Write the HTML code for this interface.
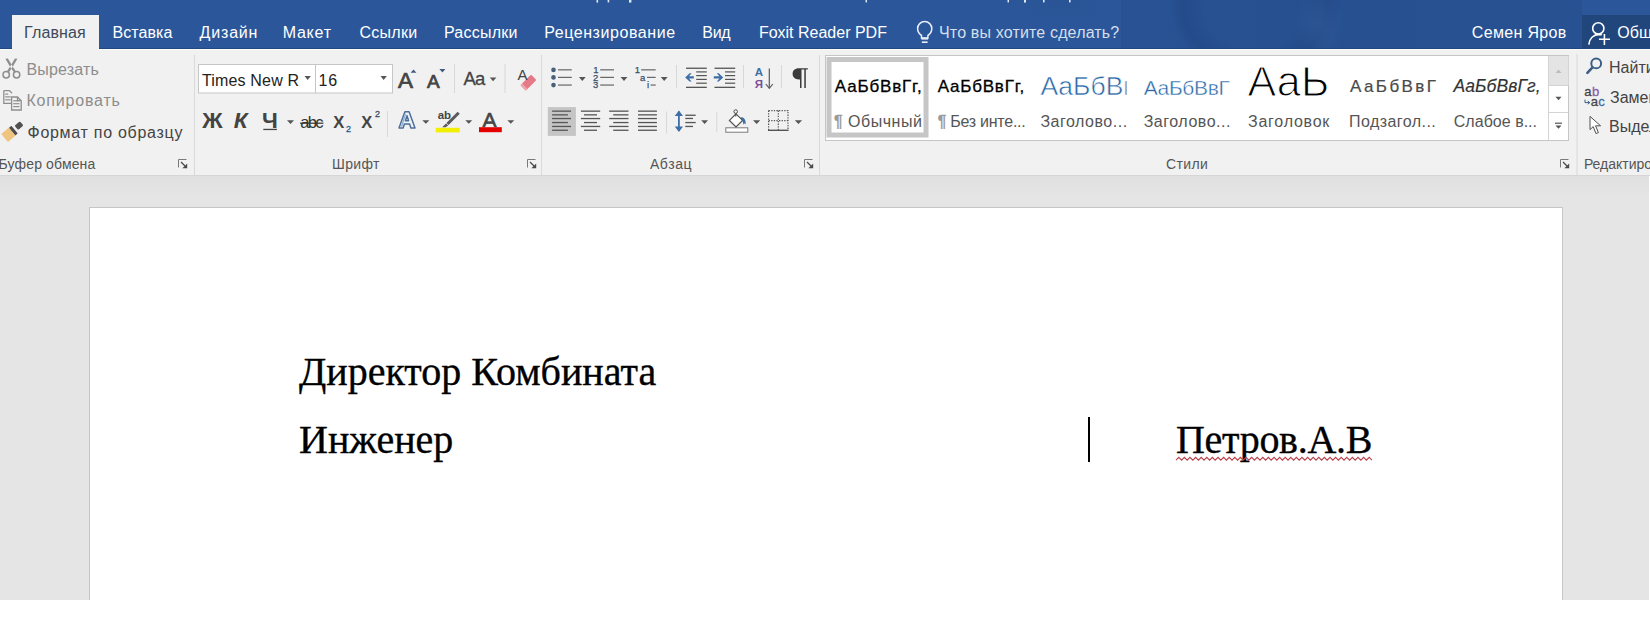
<!DOCTYPE html>
<html><head><meta charset="utf-8">
<style>
*{margin:0;padding:0;box-sizing:border-box}
html,body{width:1650px;height:639px;overflow:hidden;background:#fff;font-family:"Liberation Sans",sans-serif}
.a{position:absolute}
#top{position:absolute;left:0;top:0;width:1650px;height:49px;background:#2b579a;overflow:hidden;border-bottom:1px solid #214781}
#wline{position:absolute;left:0;top:49px;width:1650px;height:1px;background:#f9fbfb}
#ribbon{position:absolute;left:0;top:49px;width:1650px;height:126px;background:#f1f1f1}
#rbline{position:absolute;left:0;top:175px;width:1650px;height:1px;background:#d6d6d6}
#docarea{position:absolute;left:0;top:176px;width:1649px;height:424px;background:linear-gradient(#e0e0e0,#e5e5e5 20px,#e5e5e5)}
#page{position:absolute;left:89px;top:207px;width:1474px;height:393px;background:#fff;border:1px solid #c6c6c6;border-bottom:none}
.doc{position:absolute;font-family:"Liberation Serif",serif;font-size:40px;color:#000;line-height:48px;white-space:nowrap;-webkit-text-stroke:0.35px #000}
#ov{position:absolute;left:0;top:0}
</style></head><body>
<div id="top">
  <div class="a" style="left:1121px;top:0;width:461px;height:49px;background:linear-gradient(90deg,rgba(15,40,90,0.10),rgba(15,40,90,0.16) 40%,rgba(15,40,90,0.12))"></div>
  <div class="a" style="left:1170px;top:-70px;width:170px;height:150px;border-radius:50%;background:radial-gradient(closest-side,rgba(10,30,80,0.0) 60%,rgba(10,30,80,0.12) 85%,rgba(10,30,80,0))"></div>
  <div class="a" style="left:1295px;top:-10px;width:50px;height:70px;border-radius:50%;background:radial-gradient(closest-side,rgba(90,130,190,0.16),rgba(90,130,190,0))"></div>
  <div class="a" style="left:1000px;top:-30px;width:120px;height:60px;background:radial-gradient(closest-side,rgba(20,50,100,0.10),rgba(20,50,100,0))"></div>
  <div class="a" style="left:1582px;top:15px;width:68px;height:34px;background:#20467c"></div>
</div>
<div id="ribbon"></div>
<div id="wline"></div>
<div class="a" style="left:12px;top:15px;width:87px;height:36px;background:#f1f1f1"></div>
<div id="rbline"></div>
<div id="docarea"></div>
<div id="page"></div>
<div class="doc" style="left:299px;top:348px">Директор Комбината</div>
<div class="doc" style="left:299px;top:416px">Инженер</div>
<div class="doc" style="left:1176px;top:416px;letter-spacing:-0.3px">Петров.А.В</div>
<div class="a" style="left:1088px;top:417px;width:1.5px;height:45px;background:#000"></div>
<svg id="ov" width="1650" height="639" viewBox="0 0 1650 639">
<defs>
<clipPath id="c1"><rect x="1030" y="60" width="96.5" height="50"/></clipPath>
</defs>
<!-- separators -->
<g fill="#dadada">
<rect x="194" y="55" width="1" height="120"/>
<rect x="541" y="55" width="1" height="120"/>
<rect x="819" y="55" width="1" height="120"/>
<rect x="1576.5" y="54" width="1" height="121"/>
</g>
<!-- styles gallery -->
<rect x="825.5" y="55.5" width="743" height="85" fill="#fff" stroke="#c6c6c6" stroke-width="1"/>
<rect x="829" y="59.5" width="97" height="75.5" fill="#fff" stroke="#c6c6c6" stroke-width="5"/>
<rect x="1548" y="56" width="20.5" height="29.5" fill="#e4e4e4"/>
<line x1="1548.5" y1="56" x2="1548.5" y2="140" stroke="#d4d4d4"/>
<line x1="1548" y1="85.5" x2="1568" y2="85.5" stroke="#d4d4d4"/>
<line x1="1548" y1="112.5" x2="1568" y2="112.5" stroke="#d4d4d4"/>
<!-- font boxes -->
<rect x="198.5" y="64.5" width="194" height="28.5" fill="#fff" stroke="#c6c6c6"/>
<line x1="315.5" y1="65" x2="315.5" y2="93" stroke="#c6c6c6"/>
<!-- squiggle -->
<polyline fill="none" stroke="#b8424a" stroke-width="1.1" points="1176.0,460.2 1178.8,457.4 1181.6,460.2 1184.4,457.4 1187.2,460.2 1190.0,457.4 1192.8,460.2 1195.6,457.4 1198.4,460.2 1201.2,457.4 1204.0,460.2 1206.8,457.4 1209.6,460.2 1212.4,457.4 1215.2,460.2 1218.0,457.4 1220.8,460.2 1223.6,457.4 1226.4,460.2 1229.2,457.4 1232.0,460.2 1234.8,457.4 1237.6,460.2 1240.4,457.4 1243.2,460.2 1246.0,457.4 1248.8,460.2 1251.6,457.4 1254.4,460.2 1257.2,457.4 1260.0,460.2 1262.8,457.4 1265.6,460.2 1268.4,457.4 1271.2,460.2 1274.0,457.4 1276.8,460.2 1279.6,457.4 1282.4,460.2 1285.2,457.4 1288.0,460.2 1290.8,457.4 1293.6,460.2 1296.4,457.4 1299.2,460.2 1302.0,457.4 1304.8,460.2 1307.6,457.4 1310.4,460.2 1313.2,457.4 1316.0,460.2 1318.8,457.4 1321.6,460.2 1324.4,457.4 1327.2,460.2 1330.0,457.4 1332.8,460.2 1335.6,457.4 1338.4,460.2 1341.2,457.4 1344.0,460.2 1346.8,457.4 1349.6,460.2 1352.4,457.4 1355.2,460.2 1358.0,457.4 1360.8,460.2 1363.6,457.4 1366.4,460.2 1369.2,457.4 1372.0,460.2"/>
<!-- clipboard: scissors -->
<g fill="none" stroke="#8e8e8e" stroke-width="1.5">
<circle cx="6.2" cy="74.8" r="3.2"/>
<circle cx="16.6" cy="74.8" r="3.2"/>
</g>
<path d="M5.4 58.8 L7.9 58.5 L12.5 66.2 L16 71.6 L14.5 72.9 L10.5 67.4 Z M17.4 58.8 L14.9 58.5 L10.3 66.2 L6.8 71.6 L8.3 72.9 L12.3 67.4 Z" fill="#8e8e8e"/>
<!-- copy -->
<g fill="none" stroke="#8e8e8e" stroke-width="1.3">
<path d="M3.8 90.6 H9.5 L12 93.2 M3.8 90.6 V103.3 H11"/>
<path d="M11.6 97 H17.5 L21.2 100.7 V110 H11.6 Z"/>
<path d="M17.5 97 V100.7 H21.2"/>
</g>
<g fill="#8e8e8e">
<rect x="5.2" y="93.5" width="3" height="1.2"/><rect x="5.2" y="96.3" width="5.5" height="1.2"/><rect x="5.2" y="99.2" width="5.5" height="1.2"/>
<rect x="13.2" y="100.2" width="6.3" height="1.2"/><rect x="13.2" y="103.1" width="6.3" height="1.2"/><rect x="13.2" y="106" width="6.3" height="1.2"/>
</g>
<!-- format painter -->
<g transform="translate(11.5 132.2) rotate(-40)">
<rect x="-9" y="-5.2" width="10" height="10.4" fill="#efc47e"/>
<rect x="1" y="-5" width="3" height="10" rx="0.6" fill="#4b4b4b"/>
<rect x="6.5" y="-3" width="7" height="5.5" rx="1.2" fill="#505050"/>
</g>
<!-- font dropdown arrows -->
<g fill="#555">
<path d="M304.5 76 H310.8 L307.65 80 Z"/>
<path d="M380.5 76 H386.8 L383.65 80 Z"/>
<path d="M287 120.3 H294 L290.5 124 Z"/>
<path d="M422.3 120.2 H429.4 L425.85 123.8 Z"/>
<path d="M465.3 120.2 H472.2 L468.75 123.8 Z"/>
<path d="M507.4 120.2 H514.2 L510.8 123.8 Z"/>
<path d="M489.8 77.5 H496.4 L493.1 81.3 Z"/>
</g>
<!-- grow / shrink arrows -->
<path d="M410.6 72.8 H416.4 L413.5 69.4 Z" fill="#3e5a7c"/>
<path d="M439.4 69 H445.4 L442.4 72.5 Z" fill="#3e5a7c"/>
<!-- separators font group -->
<g fill="#d8d8d8">
<rect x="454" y="64" width="1" height="29"/>
<rect x="504.5" y="64" width="1" height="29"/>
<rect x="387" y="111" width="1" height="26"/>
</g>
<!-- clear formatting eraser -->
<g transform="translate(528.4 82.6) rotate(-45)">
<rect x="-7.5" y="-3.8" width="15" height="7.6" rx="1" fill="#e57a86"/>
<rect x="-7.5" y="-3.8" width="2.4" height="7.6" fill="#f0a6ae"/>
</g>
<!-- strikethrough line, underline -->
<rect x="300" y="122.6" width="23.4" height="1.2" fill="#333"/>
<rect x="263.3" y="128.8" width="13.6" height="1.3" fill="#444"/>
<!-- highlighter -->
<rect x="435.7" y="127.8" width="24" height="4.6" fill="#f2f000"/>
<path d="M457.6 111.8 L459.8 113.8 L448.6 125 L446.4 123 Z M446 123.4 L448.2 125.4 L445.6 127.2 L442.2 127.2 Z" fill="#5b5b5b"/>
<!-- font color bar -->
<rect x="479" y="127.2" width="22.8" height="5" fill="#e50000"/>
<!-- text effects A -->
<path d="M404.9 111.8 H409.1 L415 128 H410.9 L409.6 124 H404.4 L403.1 128 H399 Z M405.4 120.8 H408.6 L407 115.6 Z" fill="#eef3f9" stroke="#4f6f98" stroke-width="1.5" stroke-linejoin="round"/>
<path d="M405.6 113.6 L401.6 126.6" stroke="#8fb0d8" stroke-width="1.4"/>
<!-- launchers -->
<path d="M178.5 167.5 V159.5 H186.5" fill="none" stroke="#7a7a7a" stroke-width="1"/>
<path d="M181 162 L185 166" stroke="#4a4a4a" stroke-width="1.3"/>
<path d="M187.2 163.4 V168.2 H182.4 Z" fill="#4a4a4a"/>
<path d="M527.5 167.5 V159.5 H535.5" fill="none" stroke="#7a7a7a" stroke-width="1"/>
<path d="M530 162 L534 166" stroke="#4a4a4a" stroke-width="1.3"/>
<path d="M536.2 163.4 V168.2 H531.4 Z" fill="#4a4a4a"/>
<path d="M804.5 167.5 V159.5 H812.5" fill="none" stroke="#7a7a7a" stroke-width="1"/>
<path d="M807 162 L811 166" stroke="#4a4a4a" stroke-width="1.3"/>
<path d="M813.2 163.4 V168.2 H808.4 Z" fill="#4a4a4a"/>
<path d="M1560.5 167.5 V159.5 H1568.5" fill="none" stroke="#7a7a7a" stroke-width="1"/>
<path d="M1563 162 L1567 166" stroke="#4a4a4a" stroke-width="1.3"/>
<path d="M1569.2 163.4 V168.2 H1564.4 Z" fill="#4a4a4a"/>
<!-- paragraph: bullets -->
<g fill="#4a5f7a"><circle cx="553.5" cy="69.9" r="2.3"/><circle cx="553.5" cy="77.4" r="2.3"/><circle cx="553.5" cy="85.1" r="2.3"/></g>
<g fill="#5a5a5a">
<rect x="558" y="69.3" width="13.8" height="1.1"/><rect x="558" y="76.8" width="13.8" height="1.1"/><rect x="558" y="84.5" width="13.8" height="1.1"/>
<rect x="600.2" y="69.3" width="13.8" height="1.1"/><rect x="600.2" y="76.8" width="13.8" height="1.1"/><rect x="600.2" y="84.5" width="13.8" height="1.1"/>
<rect x="641.1" y="69.3" width="14.6" height="1.1"/><rect x="647" y="76.8" width="8.7" height="1.1"/><rect x="650.6" y="84.5" width="5.1" height="1.1"/>
</g>
<g fill="#555">
<path d="M578.9 77 H585.7 L582.3 80.9 Z"/>
<path d="M620.6 77 H627.4 L624 80.9 Z"/>
<path d="M660.8 77 H667.6 L664.2 80.9 Z"/>
<path d="M701.2 120.2 H708 L704.6 123.9 Z"/>
<path d="M753 120.2 H760.3 L756.65 123.9 Z"/>
<path d="M794.8 120.2 H802.1 L798.45 123.9 Z"/>
</g>
<!-- separators paragraph -->
<g fill="#d8d8d8">
<rect x="676" y="65" width="1" height="23"/>
<rect x="743" y="65" width="1" height="23"/>
<rect x="781" y="65" width="1" height="23"/>
<rect x="666" y="111.5" width="1" height="22"/>
<rect x="716.3" y="112" width="1" height="20"/>
</g>
<!-- indent -->
<g fill="#555">
<rect x="686" y="67.6" width="20.8" height="1.3"/><rect x="686" y="86.7" width="20.8" height="1.3"/>
<rect x="696.2" y="71.3" width="10.6" height="1.2"/><rect x="696.2" y="75" width="10.6" height="1.2"/><rect x="696.2" y="78.8" width="10.6" height="1.2"/><rect x="696.2" y="82.6" width="10.6" height="1.2"/>
<rect x="714.5" y="67.6" width="20.7" height="1.3"/><rect x="714.5" y="86.7" width="20.7" height="1.3"/>
<rect x="725" y="71.3" width="10.2" height="1.2"/><rect x="725" y="75" width="10.2" height="1.2"/><rect x="725" y="78.8" width="10.2" height="1.2"/><rect x="725" y="82.6" width="10.2" height="1.2"/>
</g>
<path d="M685.2 77.4 L689.6 73.2 H691.6 L689 76.2 H693.8 V78.6 H689 L691.6 81.6 H689.6 Z" fill="#3d6ea5"/>
<path d="M723.2 77.4 L718.8 73.2 H716.8 L719.4 76.2 H713.8 V78.6 H719.4 L716.8 81.6 H718.8 Z" fill="#3d6ea5"/>
<!-- sort -->
<path d="M769.3 68.5 V88" stroke="#5a5a5a" stroke-width="1.2"/>
<path d="M765.8 84 L769.3 88.4 L772.8 84" fill="none" stroke="#5a5a5a" stroke-width="1.2"/>
<!-- pilcrow -->
<path d="M807.8 68.2 H799 C794.8 68.2 792.6 70.6 792.6 73.8 C792.6 77 794.8 79.4 799 79.4 H800 V88 H801.5 V69.6 H804.3 V88 H805.8 V69.6 H807.8 Z" fill="#3b3b3b"/>
<!-- align -->
<rect x="547.8" y="107.1" width="28.1" height="28.8" fill="#c5c5c5"/>
<g fill="#555">
<rect x="552.1" y="110.5" width="18.9" height="1.3"/><rect x="552.1" y="114.2" width="15.8" height="1.3"/><rect x="552.1" y="117.9" width="18.9" height="1.3"/><rect x="552.1" y="121.9" width="15.8" height="1.3"/><rect x="552.1" y="125.8" width="18.9" height="1.3"/><rect x="552.1" y="129.6" width="15.8" height="1.3"/>
<rect x="580.9" y="110.5" width="19.3" height="1.3"/><rect x="584" y="114.2" width="13" height="1.3"/><rect x="580.9" y="117.9" width="19.3" height="1.3"/><rect x="584" y="121.9" width="13" height="1.3"/><rect x="580.9" y="125.8" width="19.3" height="1.3"/><rect x="584" y="129.6" width="13" height="1.3"/>
<rect x="609.2" y="110.5" width="19.3" height="1.3"/><rect x="613.2" y="114.2" width="15.3" height="1.3"/><rect x="609.2" y="117.9" width="19.3" height="1.3"/><rect x="613.2" y="121.9" width="15.3" height="1.3"/><rect x="609.2" y="125.8" width="19.3" height="1.3"/><rect x="613.2" y="129.6" width="15.3" height="1.3"/>
<rect x="638" y="110.5" width="18.9" height="1.3"/><rect x="638" y="114.2" width="18.9" height="1.3"/><rect x="638" y="117.9" width="18.9" height="1.3"/><rect x="638" y="121.9" width="18.9" height="1.3"/><rect x="638" y="125.8" width="18.9" height="1.3"/><rect x="638" y="129.6" width="18.9" height="1.3"/>
</g>
<!-- line spacing -->
<path d="M678.9 111.5 V131" stroke="#3d6ea5" stroke-width="1.8"/>
<path d="M674.8 116 L678.9 110.6 L683 116 Z M674.8 126.6 L678.9 132 L683 126.6 Z" fill="#3d6ea5"/>
<g fill="#555">
<rect x="685.3" y="114.6" width="10.4" height="1.3"/><rect x="685.3" y="117.8" width="7.7" height="1.3"/><rect x="685.3" y="121.9" width="10.4" height="1.3"/><rect x="685.3" y="125.8" width="7.7" height="1.3"/>
</g>
<!-- shading -->
<rect x="725.8" y="127.8" width="22" height="4.4" fill="#fff" stroke="#7a7a7a" stroke-width="1"/>
<path d="M736 113.8 L742.6 120.4 L736 127 L729.4 120.4 Z" fill="#fff" stroke="#505050" stroke-width="1.2"/>
<circle cx="735.7" cy="111.6" r="1.8" fill="none" stroke="#505050" stroke-width="1"/>
<path d="M735.8 113.4 V116.6" stroke="#505050" stroke-width="1.2"/>
<path d="M740.6 117.2 C744 117 746.2 119.6 745.6 124.6 L744.2 123.2 L743.4 124.8 C743 121.6 742.6 119.8 741.2 119" fill="#3d6ea5"/>
<!-- borders -->
<g fill="none" stroke="#555" stroke-width="1.2" stroke-dasharray="1.3 1.3">
<path d="M768.6 110.6 H788 V130 M768.6 110.6 V130 M778.3 110.6 V130 M768.6 120.6 H788"/>
</g>
<rect x="768" y="129.6" width="20.6" height="1.4" fill="#555"/>
<!-- styles scroll arrows -->
<path d="M1555.5 73 H1561.5 L1558.5 69.6 Z" fill="#bdbdbd"/>
<path d="M1555.5 96.8 H1561.5 L1558.5 100.2 Z" fill="#555"/>
<rect x="1555" y="122.6" width="7" height="1.2" fill="#555"/>
<path d="M1555.5 125.4 H1561.5 L1558.5 128.8 Z" fill="#555"/>
<!-- search -->
<circle cx="1596.2" cy="63.4" r="4.9" fill="none" stroke="#3b5e85" stroke-width="2"/>
<path d="M1592.5 67.4 L1587.4 72.8" stroke="#3b5e85" stroke-width="2.6" stroke-linecap="round"/>
<!-- replace arrow -->
<path d="M1585 99.6 V102.6 H1589.6 M1587.8 101 L1589.8 102.6 L1587.8 104.2" fill="none" stroke="#3b5e85" stroke-width="1"/>
<!-- select cursor -->
<path d="M1590 116.4 V129.6 L1593.2 126.6 L1596 133.6 L1598.4 132.6 L1595.6 125.8 H1600.6 Z" fill="#fff" stroke="#505050" stroke-width="1" stroke-linejoin="round"/>
<!-- lightbulb -->
<path d="M921.5 38 V35.5 C918.6 33.6 917.6 31 917.6 28.6 C917.6 24.6 920.8 21.6 924.7 21.6 C928.6 21.6 931.8 24.6 931.8 28.6 C931.8 31 930.8 33.6 927.9 35.5 V38 Z" fill="none" stroke="#e8eef7" stroke-width="1.5"/>
<rect x="921.3" y="37.6" width="6.8" height="2" fill="#e8eef7"/>
<rect x="921.8" y="41.4" width="5.8" height="1.6" fill="#e8eef7"/>
<!-- person -->
<g fill="none" stroke="#fff" stroke-width="1.6">
<circle cx="1598.3" cy="28.4" r="5.6"/>
<path d="M1588.8 44.6 C1589.4 38.6 1593.4 34.6 1599.4 34.4 C1600.2 34.4 1601 34.5 1601.8 34.7"/>
<path d="M1599 39.3 H1610 M1604.4 34 V45"/>
</g>
<!-- title descenders -->
<g fill="#dfe7f2">
<rect x="596.5" y="0" width="1.6" height="2.6"/><rect x="607.6" y="0" width="1.6" height="2.4"/><rect x="629" y="0" width="2.4" height="2.6"/>
<rect x="865.5" y="0" width="1.5" height="2.4"/>
<rect x="1007.5" y="0" width="1.5" height="2.4"/><rect x="1024" y="0" width="2" height="2.6"/><rect x="1043" y="0" width="1.6" height="2.4"/><rect x="1069" y="0" width="1.6" height="2.4"/>
</g>

<text x="24.10" y="38.00" font-family="Liberation Sans" font-size="16" fill="#3d4a5a" letter-spacing="0.13">Главная</text>
<text x="112.50" y="38.00" font-family="Liberation Sans" font-size="16" fill="#fff" letter-spacing="0.07">Вставка</text>
<text x="199.60" y="38.00" font-family="Liberation Sans" font-size="16" fill="#fff" letter-spacing="0.81">Дизайн</text>
<text x="282.70" y="38.00" font-family="Liberation Sans" font-size="16" fill="#fff" letter-spacing="0.76">Макет</text>
<text x="359.50" y="38.00" font-family="Liberation Sans" font-size="16" fill="#fff" letter-spacing="0.26">Ссылки</text>
<text x="444.00" y="38.00" font-family="Liberation Sans" font-size="16" fill="#fff" letter-spacing="0.23">Рассылки</text>
<text x="544.20" y="38.00" font-family="Liberation Sans" font-size="16" fill="#fff" letter-spacing="0.57">Рецензирование</text>
<text x="702.30" y="38.00" font-family="Liberation Sans" font-size="16" fill="#fff" letter-spacing="-0.30">Вид</text>
<text x="758.90" y="38.00" font-family="Liberation Sans" font-size="16" fill="#fff">Foxit Reader PDF</text>
<text x="939.00" y="38.00" font-family="Liberation Sans" font-size="16" fill="#d5dfec" letter-spacing="0.16">Что вы хотите сделать?</text>
<text x="1471.80" y="38.00" font-family="Liberation Sans" font-size="16" fill="#fff" letter-spacing="0.34">Семен Яров</text>
<text x="1617.30" y="38.00" font-family="Liberation Sans" font-size="16" fill="#fff">Общий доступ</text>
<text x="26.50" y="75.00" font-family="Liberation Sans" font-size="16" fill="#8d8d8d" letter-spacing="0.17">Вырезать</text>
<text x="26.50" y="106.30" font-family="Liberation Sans" font-size="16" fill="#8d8d8d" letter-spacing="0.80">Копировать</text>
<text x="27.50" y="137.70" font-family="Liberation Sans" font-size="16" fill="#444" letter-spacing="0.72">Формат по образцу</text>
<text x="-1.50" y="168.50" font-family="Liberation Sans" font-size="14" fill="#555" letter-spacing="0.15">Буфер обмена</text>
<text x="332.00" y="168.50" font-family="Liberation Sans" font-size="14" fill="#555" letter-spacing="0.34">Шрифт</text>
<text x="649.90" y="168.50" font-family="Liberation Sans" font-size="14" fill="#555" letter-spacing="0.61">Абзац</text>
<text x="1166.00" y="168.50" font-family="Liberation Sans" font-size="14" fill="#555" letter-spacing="0.37">Стили</text>
<text x="1583.90" y="168.50" font-family="Liberation Sans" font-size="14" fill="#555">Редактирование</text>
<text x="202.00" y="85.70" font-family="Liberation Sans" font-size="16" fill="#222" letter-spacing="0.16">Times New R</text>
<text x="318.60" y="85.70" font-family="Liberation Sans" font-size="16" fill="#222" letter-spacing="0.70">16</text>
<text x="834.80" y="92.00" font-family="Liberation Sans" font-size="17" fill="#000" letter-spacing="0.83" stroke="#000" stroke-width="0.3">АаБбВвГг,</text>
<text x="834.00" y="126.50" font-family="Liberation Sans" font-size="16" fill="#555" letter-spacing="0.52"><tspan fill="#9a9a9a" stroke="#9a9a9a" stroke-width="0.5">¶</tspan> Обычный</text>
<text x="937.70" y="92.00" font-family="Liberation Sans" font-size="17" fill="#000" letter-spacing="0.79" stroke="#000" stroke-width="0.3">АаБбВвГг,</text>
<text x="937.70" y="126.50" font-family="Liberation Sans" font-size="16" fill="#555" letter-spacing="-0.25"><tspan fill="#9a9a9a" stroke="#9a9a9a" stroke-width="0.5">¶</tspan> Без инте...</text>
<text x="1040.40" y="94.90" font-family="Liberation Sans" font-size="26.5" fill="#2a68a8" clip-path="url(#c1)" stroke="#fff" stroke-width="0.55">АаБбВвГг</text>
<text x="1040.40" y="126.80" font-family="Liberation Sans" font-size="16" fill="#555" letter-spacing="0.52">Заголово...</text>
<text x="1143.70" y="94.60" font-family="Liberation Sans" font-size="21" fill="#2a68a8" letter-spacing="-0.35" stroke="#fff" stroke-width="0.4">АаБбВвГ</text>
<text x="1143.70" y="126.80" font-family="Liberation Sans" font-size="16" fill="#555" letter-spacing="0.52">Заголово...</text>
<text x="1247.40" y="95.70" font-family="Liberation Sans" font-size="43" fill="#000" letter-spacing="0.26" stroke="#fff" stroke-width="1.1">АаЬ</text>
<text x="1248.00" y="127.00" font-family="Liberation Sans" font-size="16" fill="#555" letter-spacing="0.76">Заголовок</text>
<text x="1350.00" y="92.00" font-family="Liberation Sans" font-size="17" fill="#4a4a4a" letter-spacing="2.43" stroke="#4a4a4a" stroke-width="0.2">АаБбВвГ</text>
<text x="1349.00" y="126.80" font-family="Liberation Sans" font-size="16" fill="#555" letter-spacing="0.45">Подзагол...</text>
<text x="1453.60" y="91.70" font-family="Liberation Sans" font-size="17.5" fill="#333" font-style="italic" letter-spacing="0.06" stroke="#333" stroke-width="0.15">АаБбВвГг,</text>
<text x="1453.80" y="126.50" font-family="Liberation Sans" font-size="16" fill="#555" letter-spacing="0.02">Слабое в...</text>
<text x="1609.00" y="73.00" font-family="Liberation Sans" font-size="16" fill="#444">Найти</text>
<text x="1610.00" y="103.30" font-family="Liberation Sans" font-size="16" fill="#444">Заменить</text>
<text x="1609.00" y="132.40" font-family="Liberation Sans" font-size="16" fill="#444">Выделить</text>
<text x="202.30" y="127.90" font-family="Liberation Sans" font-size="22.5" fill="#444" font-weight="bold">Ж</text>
<text x="233.70" y="127.90" font-family="Liberation Sans" font-size="22.5" fill="#444" font-weight="bold" font-style="italic">К</text>
<text x="262.00" y="127.90" font-family="Liberation Sans" font-size="22.5" fill="#444" font-weight="bold">Ч</text>
<text x="300.30" y="127.50" font-family="Liberation Sans" font-size="16.5" fill="#333" letter-spacing="-1.73">abc</text>
<text x="333.20" y="127.50" font-family="Liberation Sans" font-size="16.5" fill="#444" font-weight="bold">X</text>
<text x="346.00" y="131.60" font-family="Liberation Sans" font-size="9" fill="#2b5a8a" stroke="#2b5a8a" stroke-width="0.3">2</text>
<text x="361.30" y="127.50" font-family="Liberation Sans" font-size="16.5" fill="#444" font-weight="bold">X</text>
<text x="375.10" y="117.20" font-family="Liberation Sans" font-size="9" fill="#3b4d66" stroke="#3b4d66" stroke-width="0.3">2</text>
<text x="398.00" y="87.50" font-family="Liberation Sans" font-size="22.5" fill="#444" stroke="#444" stroke-width="0.7">A</text>
<text x="427.00" y="87.50" font-family="Liberation Sans" font-size="19" fill="#444" stroke="#444" stroke-width="0.7">A</text>
<text x="463.50" y="84.60" font-family="Liberation Sans" font-size="18.5" fill="#444" letter-spacing="-0.84" stroke="#444" stroke-width="0.3">Aa</text>
<text x="517.50" y="79.70" font-family="Liberation Sans" font-size="15" fill="#444">A</text>
<text x="437.70" y="118.80" font-family="Liberation Sans" font-size="11.5" fill="#444" font-weight="bold">ab</text>
<text x="482.60" y="126.90" font-family="Liberation Sans" font-size="21" fill="#444" stroke="#444" stroke-width="0.6">A</text>
<text x="593.20" y="73.00" font-family="Liberation Sans" font-size="9.5" fill="#3b4d66" stroke="#3b4d66" stroke-width="0.25">1</text>
<text x="593.00" y="80.60" font-family="Liberation Sans" font-size="9.5" fill="#3b4d66" stroke="#3b4d66" stroke-width="0.25">2</text>
<text x="593.00" y="88.40" font-family="Liberation Sans" font-size="9.5" fill="#3b4d66" stroke="#3b4d66" stroke-width="0.25">3</text>
<text x="634.80" y="73.00" font-family="Liberation Sans" font-size="9.5" fill="#3b4d66" stroke="#3b4d66" stroke-width="0.25">1</text>
<text x="640.00" y="80.60" font-family="Liberation Sans" font-size="9.5" fill="#3b4d66" stroke="#3b4d66" stroke-width="0.25">a</text>
<text x="647.00" y="88.40" font-family="Liberation Sans" font-size="9.5" fill="#3b4d66" stroke="#3b4d66" stroke-width="0.25">i</text>
<text x="754.80" y="76.10" font-family="Liberation Sans" font-size="11.5" fill="#3d6ea5" font-weight="bold">A</text>
<text x="754.80" y="87.60" font-family="Liberation Sans" font-size="11.5" fill="#7a4f9a" font-weight="bold">Я</text>
<text x="1584.30" y="95.70" font-family="Liberation Sans" font-size="13" fill="#444" stroke="#444" stroke-width="0.3">a</text>
<text x="1592.00" y="95.70" font-family="Liberation Sans" font-size="13" fill="#8a5aa8" stroke="#8a5aa8" stroke-width="0.3">b</text>
<text x="1590.70" y="106.20" font-family="Liberation Sans" font-size="13" fill="#444" stroke="#444" stroke-width="0.3">a</text>
<text x="1598.30" y="106.20" font-family="Liberation Sans" font-size="13" fill="#3d6ea5" stroke="#3d6ea5" stroke-width="0.3">c</text>
</svg>
</body></html>
